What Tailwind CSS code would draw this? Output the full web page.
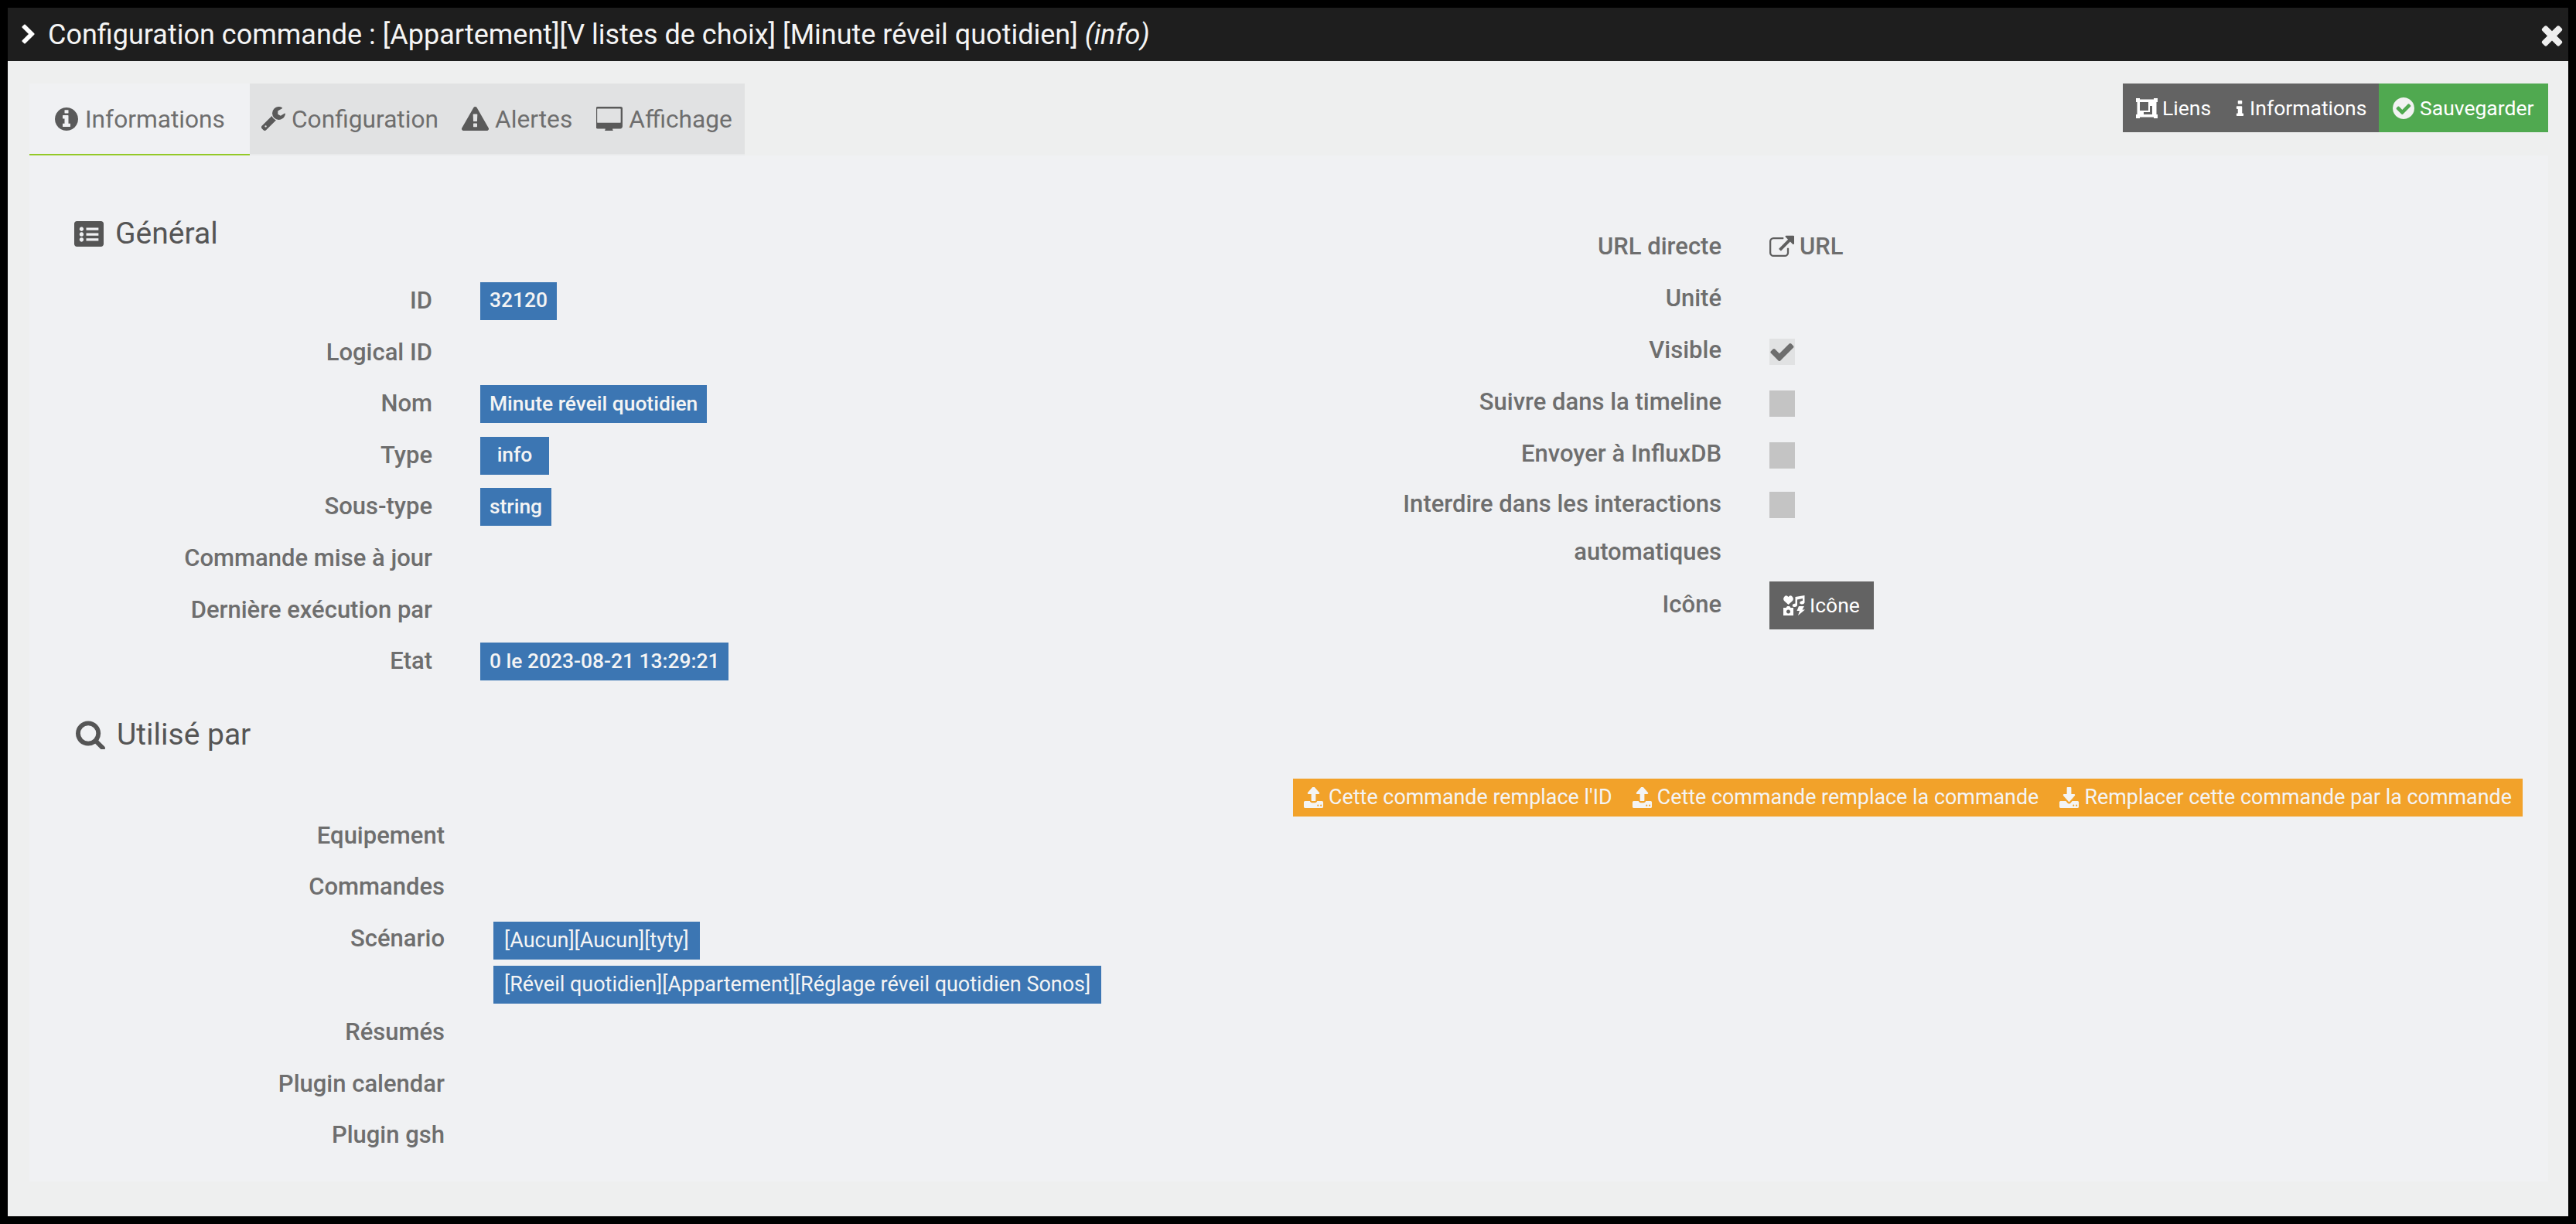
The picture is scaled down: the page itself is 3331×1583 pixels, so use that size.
<!DOCTYPE html>
<html lang="fr">
<head>
    <meta charset="UTF-8">
    <title>Configuration commande</title>
    <script src="https://cdn.jsdelivr.net/npm/@tailwindcss/browser@4"></script>
</head>
<body class="bg-black p-[10px] h-[1583px] overflow-hidden font-['Roboto',sans-serif] text-[31px] text-[#6e6e6e]">
    <svg class="hidden" xmlns="http://www.w3.org/2000/svg">
        <symbol id="i-chevron" viewBox="0 0 1792 1792"><path d="M1363 877l-742 742q-19 19-45 19t-45-19l-166-166q-19-19-19-45t19-45l531-531-531-531q-19-19-19-45t19-45l166-166q19-19 45-19t45 19l742 742q19 19 19 45t-19 45z"/></symbol>
        <symbol id="i-times" viewBox="0 0 1792 1792"><path d="M1490 1322q0 40-28 68l-136 136q-28 28-68 28t-68-28l-294-294-294 294q-28 28-68 28t-68-28l-136-136q-28-28-28-68t28-68l294-294-294-294q-28-28-28-68t28-68l136-136q28-28 68-28t68 28l294 294 294-294q28-28 68-28t68 28l136 136q28 28 28 68t-28 68l-294 294 294 294q28 28 28 68z"/></symbol>
        <symbol id="i-info-circle" viewBox="128 128 1536 1536"><path d="M1152 1376v-160q0-14-9-23t-23-9h-96v-512q0-14-9-23t-23-9h-320q-14 0-23 9t-9 23v160q0 14 9 23t23 9h96v320h-96q-14 0-23 9t-9 23v160q0 14 9 23t23 9h448q14 0 23-9t9-23zm-128-896v-160q0-14-9-23t-23-9h-192q-14 0-23 9t-9 23v160q0 14 9 23t23 9h192q14 0 23-9t9-23zm640 416q0 209-103 385.500t-279.500 279.500-385.500 103-385.500-103-279.500-279.500-103-385.500 103-385.500 279.500-279.500 385.500-103 385.500 103 279.500 279.500 103 385.500z"/></symbol>
        <symbol id="i-wrench" viewBox="90 130 1640 1640"><path d="M448 1472q0-26-19-45t-45-19-45 19-19 45 19 45 45 19 45-19 19-45zm644-420l-682 682q-37 37-90 37-52 0-91-37l-106-108q-38-36-38-90 0-53 38-91l681-681q39 98 114.500 173.500t173.500 114.500zm634-435q0 39-23 106-47 134-164.500 217.500t-258.500 83.500q-185 0-316.500-131.500t-131.500-316.500 131.500-316.500 316.500-131.500q58 0 121.500 16.500t107.500 46.500q16 11 16 28t-16 28l-293 169v224l193 107q5-3 79-48.500t135.500-81 70.500-35.500q15 0 23.500 10t8.500 25z"/></symbol>
        <symbol id="i-warning" viewBox="0 0 1792 1664" preserveAspectRatio="none"><path d="M1024 1375v-190q0-14-9.500-23.500t-22.500-9.500h-192q-13 0-22.500 9.500t-9.500 23.500v190q0 14 9.500 23.500t22.500 9.500h192q13 0 22.500-9.500t9.500-23.500zm-2-374l18-459q0-12-10-19-13-11-24-11h-220q-11 0-24 11-10 7-10 21l17 457q0 10 10 16.500t24 6.500h185q14 0 23.500-6.500t10.500-16.500zm-14-934l768 1408q35 63-2 126-17 29-46.500 46t-63.500 17h-1536q-34 0-63.500-17t-46.500-46q-37-63-2-126l768-1408q17-31 47-49t65-18 65 18 47 49z"/></symbol>
        <symbol id="i-desktop" viewBox="0 0 1856 1536" preserveAspectRatio="none"><path d="M1728 992v-832q0-13-9.500-22.500t-22.500-9.500h-1600q-13 0-22.500 9.500t-9.500 22.500v832q0 13 9.500 22.500t22.500 9.500h1600q13 0 22.500-9.500t9.500-22.500zm128-832v1088q0 66-47 113t-113 47h-544q0 37 16 77.500t32 71 16 43.500q0 26-19 45t-45 19h-512q-26 0-45-19t-19-45q0-14 16-43.500t32-70 16-77.500h-544q-66 0-113-47t-47-113v-1088q0-66 47-113t113-47h1632q66 0 113 47t47 113z"/></symbol>
        <symbol id="i-list" viewBox="0 0 1792 1536" preserveAspectRatio="none"><path fill-rule="evenodd" d="M160 0h1472q66 0 113 47t47 113v1216q0 66-47 113t-113 47h-1472q-66 0-113-47t-47-113v-1216q0-66 47-113t113-47zM445 350a127 127 0 1 0 .1 0zM731 400v150h748v-150zM445 668a127 127 0 1 0 .1 0zM731 720v150h748v-150zM445 986a127 127 0 1 0 .1 0zM731 1040v150h748v-150z"/></symbol>
        <symbol id="i-search" viewBox="0 0 1664 1664"><path transform="translate(-64 -64)" d="M1216 832q0-185-131.500-316.500t-316.500-131.500-316.500 131.500-131.500 316.500 131.500 316.500 316.500 131.500 316.500-131.500 131.500-316.500zm512 832q0 52-38 90t-90 38q-54 0-90-38l-343-342q-179 124-399 124-143 0-273.500-55.500t-225-150-150-225-55.500-273.500 55.500-273.500 150-225 225-150 273.500-55.500 273.500 55.500 225 150 150 225 55.500 273.500q0 220-124 399l343 343q37 37 37 90z"/></symbol>
        <symbol id="i-check" viewBox="100 300 1600 1200"><path d="M1671 566q0 40-28 68l-724 724-136 136q-28 28-68 28t-68-28l-136-136-362-362q-28-28-28-68t28-68l136-136q28-28 68-28t68 28l294 295 656-657q28-28 68-28t68 28l136 136q28 28 28 68z"/></symbol>
        <symbol id="i-check-circle" viewBox="128 128 1536 1536"><path d="M1412 734q0-28-18-46l-91-90q-19-19-45-19t-45 19l-408 407-226-226q-19-19-45-19t-45 19l-91 90q-18 18-18 46 0 27 18 45l362 362q19 19 45 19 27 0 46-19l543-543q18-18 18-45zm252 162q0 209-103 385.500t-279.500 279.500-385.500 103-385.500-103-279.500-279.500-103-385.500 103-385.500 279.500-279.500 385.500-103 385.500 103 279.500 279.500 103 385.500z"/></symbol>
        <symbol id="i-external" viewBox="0 64 1792 1536"><path d="M1408 928v320q0 119-84.500 203.500t-203.500 84.500h-832q-119 0-203.500-84.500t-84.500-203.500v-832q0-119 84.500-203.500t203.500-84.500h704q14 0 23 9t9 23v64q0 14-9 23t-23 9h-704q-66 0-113 47t-47 113v832q0 66 47 113t113 47h832q66 0 113-47t47-113v-320q0-14 9-23t23-9h64q14 0 23 9t9 23zm384-864v512q0 26-19 45t-45 19-45-19l-176-176-652 652q-10 10-23 10t-23-10l-114-114q-10-10-10-23t10-23l652-652-176-176q-19-19-19-45t19-45 45-19h512q26 0 45 19t19 45z"/></symbol>
        <symbol id="i-upload" viewBox="0 128 1792 1536" preserveAspectRatio="none"><path d="M1344 1472q0-26-19-45t-45-19-45 19-19 45 19 45 45 19 45-19 19-45zm256 0q0-26-19-45t-45-19-45 19-19 45 19 45 45 19 45-19 19-45zm128-224v320q0 40-28 68t-68 28h-1472q-40 0-68-28t-28-68v-320q0-40 28-68t68-28h427q21 56 70.500 92t110.500 36h256q61 0 110.500-36t70.500-92h427q40 0 68 28t28 68zm-325-648q-17 40-59 40h-256v448q0 26-19 45t-45 19h-256q-26 0-45-19t-19-45v-448h-256q-42 0-59-40-17-39 14-69l448-448q18-19 45-19t45 19l448 448q31 30 14 69z"/></symbol>
        <symbol id="i-download" viewBox="0 0 1792 1536" preserveAspectRatio="none"><path d="M1344 1344q0-26-19-45t-45-19-45 19-19 45 19 45 45 19 45-19 19-45zm256 0q0-26-19-45t-45-19-45 19-19 45 19 45 45 19 45-19 19-45zm128-224v320q0 40-28 68t-68 28h-1472q-40 0-68-28t-28-68v-320q0-40 28-68t68-28h465l135 136q58 56 136 56t136-56l136-136h464q40 0 68 28t28 68zm-325-569q17 41-14 70l-448 448q-18 19-45 19t-45-19l-448-448q-31-29-14-70 17-39 59-39h256v-448q0-26 19-45t45-19h256q26 0 45 19t19 45v448h256q42 0 59 39z"/></symbol>
        <symbol id="i-info" viewBox="512 128 768 1408"><path d="M1216 1344v128q0 26-19 45t-45 19h-512q-26 0-45-19t-19-45v-128q0-26 19-45t45-19h64v-384h-64q-26 0-45-19t-19-45v-128q0-26 19-45t45-19h384q26 0 45 19t19 45v576h64q26 0 45 19t19 45zm-128-1152v192q0 26-19 45t-45 19h-256q-26 0-45-19t-19-45v-192q0-26 19-45t45-19h256q26 0 45 19t19 45z"/></symbol>
        <symbol id="i-ungroup" viewBox="0 0 28 26"><path fill-rule="evenodd" d="M0 0h5v1.500h18v-1.500h5v5h-1.500v16h1.500v5h-5v-1.500h-18v1.500h-5v-5h1.500v-16h-1.500zM5 5v11h11v-11zM18 10v8h-8v3h11v-11z"/></symbol>
        <symbol id="i-icons" viewBox="0 0 28 26"><path fill-rule="evenodd" d="M6.500 12l-5.500-5q-2-3 .5-5.500t5 .5q2.500-3 5-.5t.5 5.500zM15.500 2l12-2v9.500q-1 2.500-4 2t-2-3q1-1.500 3.500-1.500v-3l-7 1.500v7.500q-1 2.500-4 2t-2-3q1-1.500 3.500-1.500zM0 16h3.500l1.500-2h3l1.500 2h3.500v10h-13zM6.500 18.500a2.500 2.500 0 1 0 .01 0zM20 14h7l-2.500 4.500h3.500l-9 7.500 2-6h-3.500z"/></symbol>
    </svg>

    <div class="flex flex-col h-full bg-[#eeefef]">
        <!-- Title bar -->
        <div class="flex items-center justify-between h-[69px] bg-[#1e1e1e] text-[#f4f4f4] pl-[13px] pr-[1px]">
            <div class="flex items-center gap-[11px] text-[36px]">
                <svg class="w-[28px] h-[28px] fill-white"><use href="#i-chevron"/></svg>
                <span>Configuration commande : [Appartement][V listes de choix] [Minute réveil quotidien] <i>(info)</i></span>
            </div>
            <svg class="w-[40px] h-[40px] fill-[#eeeeee]"><use href="#i-times"/></svg>
        </div>

        <!-- Tabs row -->
        <div class="flex items-start justify-between mt-[29px] ml-[28px] mr-[26px]">
            <div class="flex h-[93px] text-[31.700px]">
                <div class="flex items-center gap-[9px] w-[285px] pl-[33px] pt-[3px] bg-[#f0f1f3] border-b-2 border-[#93c927]">
                    <svg class="w-[30px] h-[30px] fill-[#5a5a5a] -mt-[3px]"><use href="#i-info-circle"/></svg>Informations
                </div>
                <div class="flex items-center bg-[#e1e2e3] border-b-2 border-[#e9eaeb] w-[640px] pl-[15px] pt-[3px]">
                    <svg class="w-[31px] h-[31px] fill-[#5a5a5a] mr-[8px] -mt-[3px]"><use href="#i-wrench"/></svg>
                    <span class="mr-[30px]">Configuration</span>
                    <svg class="w-[35px] h-[31px] fill-[#5a5a5a] mr-[8px] -mt-[3px]"><use href="#i-warning"/></svg>
                    <span class="mr-[31px]">Alertes</span>
                    <svg class="w-[34px] h-[31px] fill-[#5a5a5a] mr-[8px] -mt-[3px]"><use href="#i-desktop"/></svg>
                    <span>Affichage</span>
                </div>
            </div>
            <div class="flex h-[63px] text-white text-[26.500px]">
                <div class="flex items-center bg-[#636363] w-[331px] pl-[17px]">
                    <svg class="w-[28px] h-[26px] fill-white mr-[6px]"><use href="#i-ungroup"/></svg>
                    <span class="mr-[32px]">Liens</span>
                    <svg class="w-[11px] h-[32px] fill-white mr-[7px]"><use href="#i-info"/></svg>
                    <span>Informations</span>
                </div>
                <div class="flex items-center gap-[7px] bg-[#50a950] w-[219px] pl-[18px]">
                    <svg class="w-[28px] h-[28px] fill-[#f2f2f2]"><use href="#i-check-circle"/></svg>Sauvegarder
                </div>
            </div>
        </div>

        <!-- Panel -->
        <div class="flex-1 bg-[#f0f1f3] ml-[28px] mr-[26px] mb-[45px] font-medium">
            <div class="grid grid-cols-[1628px_1fr]">
                <!-- General -->
                <div class="pt-[71px]">
                    <h3 class="flex items-center gap-[15px] h-[60px] pl-[58px] text-[39px] font-normal text-[#555555]">
                        <svg class="w-[38px] h-[33px] fill-[#555555]"><use href="#i-list"/></svg>Général
                    </h3>
                    <div class="mt-[24px]">
                        <div class="flex items-center h-[66.600px]"><label class="w-[521px] text-right">ID</label><span class="ml-[62px] flex items-center h-[49px] px-[12px] bg-[#3c76b3] text-[#f4f4f4] text-[26.400px]">32120</span></div>
                        <div class="flex items-center h-[66.600px]"><label class="w-[521px] text-right">Logical ID</label></div>
                        <div class="flex items-center h-[66.600px]"><label class="w-[521px] text-right">Nom</label><span class="ml-[62px] flex items-center h-[49px] px-[12px] bg-[#3c76b3] text-[#f4f4f4] text-[26.400px]">Minute réveil quotidien</span></div>
                        <div class="flex items-center h-[66.600px]"><label class="w-[521px] text-right">Type</label><span class="ml-[62px] flex items-center justify-center w-[89px] h-[49px] bg-[#3c76b3] text-[#f4f4f4] text-[26.400px]">info</span></div>
                        <div class="flex items-center h-[66.600px]"><label class="w-[521px] text-right">Sous-type</label><span class="ml-[62px] flex items-center h-[49px] px-[12px] bg-[#3c76b3] text-[#f4f4f4] text-[26.400px]">string</span></div>
                        <div class="flex items-center h-[66.600px]"><label class="w-[521px] text-right">Commande mise à jour</label></div>
                        <div class="flex items-center h-[66.600px]"><label class="w-[521px] text-right">Dernière exécution par</label></div>
                        <div class="flex items-center h-[66.600px]"><label class="w-[521px] text-right">Etat</label><span class="ml-[62px] flex items-center h-[49px] px-[12px] bg-[#3c76b3] text-[#f4f4f4] text-[26.400px]">0 le 2023-08-21 13:29:21</span></div>
                    </div>
                </div>
                <!-- Right column -->
                <div class="pt-[85px]">
                    <div class="flex items-center h-[67px]"><label class="w-[560px] text-right">URL directe</label><span class="ml-[62px] flex items-center gap-[7px]"><svg class="w-[32px] h-[31px] fill-[#5f5f5f]"><use href="#i-external"/></svg>URL</span></div>
                    <div class="flex items-center h-[67px]"><label class="w-[560px] text-right">Unité</label></div>
                    <div class="flex items-center h-[67px]"><label class="w-[560px] text-right">Visible</label><span class="ml-[62px] mt-[2px] flex items-center justify-center w-[33px] h-[34px] bg-[#e1e2e3]"><svg class="w-[31px] h-[24px] fill-[#6e6e6e]"><use href="#i-check"/></svg></span></div>
                    <div class="flex items-center h-[67px]"><label class="w-[560px] text-right">Suivre dans la timeline</label><span class="ml-[62px] mt-[2px] w-[33px] h-[34px] bg-[#c4c4c4]"></span></div>
                    <div class="flex items-center h-[67px]"><label class="w-[560px] text-right">Envoyer à InfluxDB</label><span class="ml-[62px] mt-[2px] w-[33px] h-[34px] bg-[#c4c4c4]"></span></div>
                    <div class="flex items-start h-[128px]"><label class="w-[560px] text-right leading-[62px]">Interdire dans les interactions automatiques</label><span class="ml-[62px] mt-[15px] w-[33px] h-[34px] bg-[#c4c4c4]"></span></div>
                    <div class="flex items-center h-[67px]"><label class="w-[560px] text-right">Icône</label><span class="ml-[62px] flex items-center gap-[6px] h-[62px] w-[135px] pl-[18px] bg-[#636363] text-white text-[26.500px] font-normal"><svg class="w-[28px] h-[26px] fill-white"><use href="#i-icons"/></svg>Icône</span></div>
                </div>
            </div>

            <!-- Utilisé par -->
            <h3 class="flex items-center gap-[15px] h-[60px] mt-[31px] pl-[60px] text-[39px] font-normal text-[#555555]">
                <svg class="w-[38px] h-[38px] fill-[#555555]"><use href="#i-search"/></svg>Utilisé par
            </h3>
            <div class="flex justify-end mr-[33px] mt-[27px] mb-[-8px]">
                <div class="flex items-center h-[49px] pl-[13px] pr-[14px] bg-[#f2a22a] text-[#f4f4f4] text-[26.900px] font-normal">
                    <svg class="w-[27px] h-[27px] fill-[#f4f4f4] mr-[6px]"><use href="#i-upload"/></svg><span class="mr-[25px]">Cette commande remplace l'ID</span>
                    <svg class="w-[27px] h-[27px] fill-[#f4f4f4] mr-[6px]"><use href="#i-upload"/></svg><span class="mr-[26px]">Cette commande remplace la commande</span>
                    <svg class="w-[27px] h-[27px] fill-[#f4f4f4] mr-[6px]"><use href="#i-download"/></svg><span>Remplacer cette commande par la commande</span>
                </div>
            </div>
            <div>
                <div class="flex items-center h-[66.600px]"><label class="w-[537px] text-right">Equipement</label></div>
                <div class="flex items-center h-[66.600px]"><label class="w-[537px] text-right">Commandes</label></div>
                <div class="flex items-start h-[121px]">
                    <label class="w-[537px] text-right leading-[66.600px]">Scénario</label>
                    <div class="ml-[63px] mt-[11px] flex flex-col items-start gap-[8px] text-[#f4f4f4] text-[27px] font-normal">
                        <span class="flex items-center h-[49px] px-[14px] bg-[#3c76b3]">[Aucun][Aucun][tyty]</span>
                        <span class="flex items-center h-[49px] px-[14px] bg-[#3c76b3]">[Réveil quotidien][Appartement][Réglage réveil quotidien Sonos]</span>
                    </div>
                </div>
                <div class="flex items-center h-[66.600px]"><label class="w-[537px] text-right">Résumés</label></div>
                <div class="flex items-center h-[66.600px]"><label class="w-[537px] text-right">Plugin calendar</label></div>
                <div class="flex items-center h-[66.600px]"><label class="w-[537px] text-right">Plugin gsh</label></div>
            </div>
        </div>
    </div>
</body>
</html>
